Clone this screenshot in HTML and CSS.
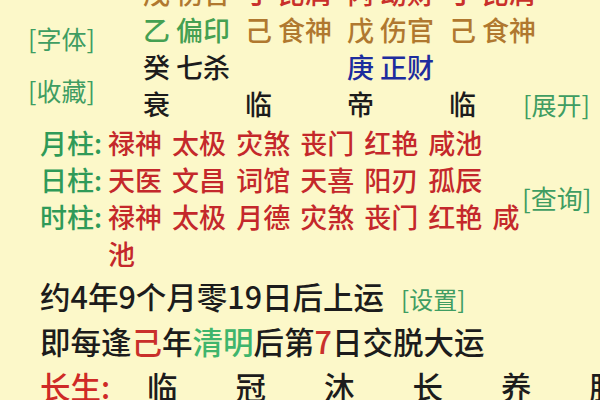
FILE: index.html
```html
<!DOCTYPE html>
<html lang="zh-CN">
<head>
<meta charset="utf-8">
<title>八字</title>
<link rel="stylesheet" href="styles.css">
</head>
<body>
<div class="page">
  <section class="chart">
    <div class="side">
      <span class="link">[字体]</span>
      <span class="link">[收藏]</span>
    </div>
    <span class="cell earth">戊 伤官</span>
    <span class="cell fire">丁 比肩</span>
    <span class="cell fire">丙 劫财</span>
    <span class="cell fire">丁 比肩</span>

    <span class="cell wood">乙 偏印</span>
    <span class="cell earth">己 食神</span>
    <span class="cell earth">戊 伤官</span>
    <span class="cell earth">己 食神</span>

    <span class="cell">癸 七杀</span>
    <span class="cell"></span>
    <span class="cell metal">庚 正财</span>
    <span class="cell"></span>

    <span class="cell">衰</span>
    <span class="cell">临</span>
    <span class="cell">帝</span>
    <span class="cell split"><span>临</span><span class="link">[展开]</span></span>
  </section>

  <section class="shensha">
    <div class="ss-rows">
      <div class="ss-row"><span class="ss-label">月柱:</span><span class="ss-text">禄神 太极 灾煞 丧门 红艳 咸池</span></div>
      <div class="ss-row"><span class="ss-label">日柱:</span><span class="ss-text">天医 文昌 词馆 天喜 阳刃 孤辰</span></div>
      <div class="ss-row"><span class="ss-label">时柱:</span><span class="ss-text">禄神 太极 月德 灾煞 丧门 红艳 咸池</span></div>
    </div>
    <span class="link query">[查询]</span>
  </section>

  <section class="run">
    <div class="run-line">约4年9个月零19日后上运<span class="link set">[设置]</span></div>
    <div class="run-line">即每逢<span class="red">己</span>年<span class="lgreen">清明</span>后第<span class="red">7</span>日交脱大运</div>
    <div class="run-line stages">
      <span class="st-label">长生:</span>
      <span class="st">临</span>
      <span class="st">冠</span>
      <span class="st">沐</span>
      <span class="st">长</span>
      <span class="st">养</span>
      <span class="st">胎</span>
    </div>
  </section>
</div>
</body>
</html>
```

FILE: styles.css
```css
html, body {
  margin: 0;
  padding: 0;
  width: 600px;
  height: 400px;
  overflow: hidden;
  background: #fcf8c9;
}

.page {
  display: flow-root;
  font-family: "Noto Sans CJK SC", "Noto Sans", sans-serif;
  font-weight: 500;
  color: #1c1c1c;
}

.link {
  color: #3f9d62;
  font-size: 25px;
  font-weight: 400;
  line-height: 30px;
  white-space: nowrap;
}

.chart {
  margin-top: -26px;
  display: grid;
  grid-template-columns: 143px 102px 102px 102px 1fr;
  grid-template-rows: repeat(4, 37px);
  font-size: 27px;
  line-height: 37px;
}

.side {
  grid-column: 1;
  grid-row: 1 / span 4;
  display: flex;
  flex-direction: column;
  align-items: flex-start;
  gap: 22px;
  padding: 49px 0 0 28px;
}

.cell {
  white-space: nowrap;
}

.split {
  display: flex;
  justify-content: space-between;
  align-items: center;
  padding-right: 10px;
}

.earth { color: #b0782f; }
.fire { color: #c9302b; }
.wood { color: #45a052; }
.metal { color: #1d2c9e; }

.shensha {
  margin-top: 2px;
  display: flex;
  align-items: center;
  padding-left: 40px;
  font-size: 27px;
  line-height: 37px;
}

.ss-rows {
  flex: none;
  width: 482px;
}

.ss-row {
  display: flex;
}

.ss-label {
  flex: none;
  width: 68px;
  color: #2f9a58;
}

.ss-text {
  width: 414px;
  color: #c4282b;
  word-spacing: 4px;
}

.query {
  font-size: 26px;
}

.run {
  margin-top: 2px;
  padding-left: 40px;
  font-size: 30.5px;
  line-height: 45px;
}

.run-line {
  white-space: nowrap;
}

.set {
  font-size: 24px;
  margin-left: 17px;
}

.red { color: #c9302b; }
.lgreen { color: #3fb56c; }

.stages {
  display: flex;
}

.st-label {
  flex: none;
  width: 107px;
  color: #cf2a26;
}

.st {
  flex: none;
  width: 88.5px;
}
```
